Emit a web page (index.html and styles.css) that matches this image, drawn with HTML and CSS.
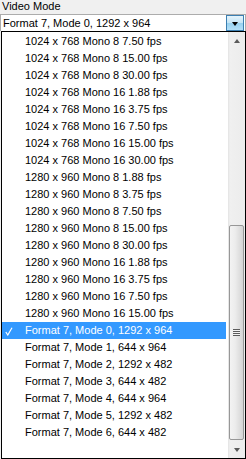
FILE: index.html
```html
<!DOCTYPE html>
<html lang="en">
<head>
    <meta charset="UTF-8">
    <title>Video Mode</title>
    <link rel="stylesheet" href="styles.css">
</head>
<body>
<div class="field-label">Video Mode</div>
<div class="combo">
    <span class="combo-text">Format 7, Mode 0, 1292 x 964</span>
    <span class="combo-button"><span class="arrow-down dark"></span></span>
</div>
<div class="dropdown">
    <ul class="options">
        <li class="option">1024 x 768 Mono 8 7.50 fps</li>
        <li class="option">1024 x 768 Mono 8 15.00 fps</li>
        <li class="option">1024 x 768 Mono 8 30.00 fps</li>
        <li class="option">1024 x 768 Mono 16 1.88 fps</li>
        <li class="option">1024 x 768 Mono 16 3.75 fps</li>
        <li class="option">1024 x 768 Mono 16 7.50 fps</li>
        <li class="option">1024 x 768 Mono 16 15.00 fps</li>
        <li class="option">1024 x 768 Mono 16 30.00 fps</li>
        <li class="option">1280 x 960 Mono 8 1.88 fps</li>
        <li class="option">1280 x 960 Mono 8 3.75 fps</li>
        <li class="option">1280 x 960 Mono 8 7.50 fps</li>
        <li class="option">1280 x 960 Mono 8 15.00 fps</li>
        <li class="option">1280 x 960 Mono 8 30.00 fps</li>
        <li class="option">1280 x 960 Mono 16 1.88 fps</li>
        <li class="option">1280 x 960 Mono 16 3.75 fps</li>
        <li class="option">1280 x 960 Mono 16 7.50 fps</li>
        <li class="option">1280 x 960 Mono 16 15.00 fps</li>
        <li class="option selected">
            <svg class="check" width="8" height="9" viewBox="0 0 8 9"><polyline points="0.8,5 2.8,8 7,0.8" fill="none" stroke="#fff" stroke-width="1.2"/></svg>
            Format 7, Mode 0, 1292 x 964
        </li>
        <li class="option">Format 7, Mode 1, 644 x 964</li>
        <li class="option">Format 7, Mode 2, 1292 x 482</li>
        <li class="option">Format 7, Mode 3, 644 x 482</li>
        <li class="option">Format 7, Mode 4, 644 x 964</li>
        <li class="option">Format 7, Mode 5, 1292 x 482</li>
        <li class="option">Format 7, Mode 6, 644 x 482</li>
    </ul>
    <div class="scrollbar">
        <div class="scroll-btn"><span class="arrow-up"></span></div>
        <div class="track">
            <div class="thumb">
                <span class="grip"></span>
            </div>
        </div>
        <div class="scroll-btn"><span class="arrow-down"></span></div>
    </div>
</div>
</body>
</html>
```

FILE: styles.css
```css
* {
    margin: 0;
    padding: 0;
    box-sizing: border-box;
}
html, body {
    height: 100%;
    overflow: hidden;
}
body {
    background: #f0f0f0;
    color: #000;
    font-family: "Liberation Sans", Arial, sans-serif;
    font-size: 11px;
}
.field-label {
    height: 12px;
    line-height: 12px;
    padding-left: 2px;
}
.combo {
    display: flex;
    margin-top: 2px;
    height: 17px;
    background: #fff;
    border: 1px solid #acacac;
    border-bottom: none;
}
.combo-text {
    flex: 1;
    line-height: 16px;
    padding-left: 2px;
}
.combo-button {
    width: 18px;
    height: 16px;
    margin-right: 1px;
    display: flex;
    align-items: center;
    justify-content: center;
    border: 1px solid #3c7fb1;
    background: linear-gradient(#e5f4fc, #c4e5f6 50%, #98d1ef 51%, #b3e0f9);
}
.arrow-down,
.arrow-up {
    width: 0;
    height: 0;
    border-left: 3.5px solid transparent;
    border-right: 3.5px solid transparent;
}
.arrow-down {
    border-top: 4px solid #5a5a5a;
}
.arrow-down.dark {
    border-top-color: #000;
    margin-top: 2px;
}
.arrow-up {
    border-bottom: 4px solid #5a5a5a;
}
.dropdown {
    display: flex;
    margin-left: 1px;
    height: 428px;
    background: #fff;
    border: 1px solid #000;
}
.options {
    flex: 1;
    list-style: none;
    padding-top: 1px;
    padding-right: 2px;
}
.option {
    display: flex;
    align-items: center;
    height: 17px;
    line-height: 17px;
    padding-left: 23px;
    white-space: nowrap;
}
.option.selected {
    position: relative;
    background: #3399ff;
    color: #fff;
}
.check {
    position: absolute;
    left: 3px;
    top: 5px;
}
.scrollbar {
    width: 17px;
    display: flex;
    flex-direction: column;
    background: linear-gradient(to right, #e3e3e3, #f0f0f0 2px, #ececec);
}
.scroll-btn {
    height: 17px;
    display: flex;
    align-items: center;
    justify-content: center;
}
.track {
    flex: 1;
    display: flex;
    flex-direction: column;
    justify-content: flex-end;
    padding-bottom: 1px;
}
.thumb {
    height: 215px;
    margin: 0 1px 0 1px;
    border: 1px solid #979797;
    border-radius: 2px;
    background: linear-gradient(to right, #f3f3f3, #ececec 40%, #d4d4d4);
    display: flex;
    align-items: center;
    justify-content: center;
}
.grip {
    width: 7px;
    height: 7px;
    background: repeating-linear-gradient(#5c5c5c 0 1px, #f4f4f4 1px 2px);
}
```
